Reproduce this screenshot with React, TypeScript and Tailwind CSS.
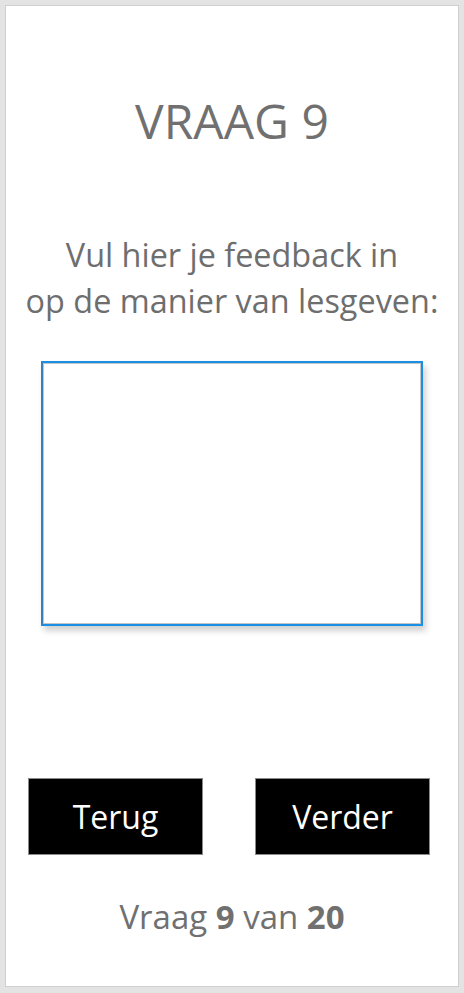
export default function App() {
  return (
    <div className="w-full h-[993px] bg-[#e3e3e3] p-[5px]" style={{ fontFamily: '"Open Sans", "Noto Sans", sans-serif' }}>
      <div className="h-[982px] w-[454px] border border-[#cfcfcf] bg-white flex flex-col items-center">
        <h1 className="mt-[85px] text-[48px] leading-[60px] text-[#707070] font-normal">VRAAG 9</h1>

        <p className="mt-[80px] text-center text-[32.4px] leading-[46px] text-[#6e6e6e] whitespace-nowrap">
          Vul hier je feedback in
          <br />
          op de manier van lesgeven:
        </p>

        <textarea className="mt-[38px] w-[382px] h-[265px] resize-none border-2 border-[#1a8fe6] border-l-[#3b7fb8] shadow-[inset_0_0_0_1px_#c4c4c4,3px_5px_6px_rgba(0,0,0,0.18)] outline-none p-2 text-[#555]" />

        <div className="mt-[152px] flex w-full gap-[52px] px-[22px]">
          <button className="w-[175px] h-[77px] bg-black border border-[#8a8a8a] text-white text-[32px]">Terug</button>
          <button className="w-[175px] h-[77px] bg-black border border-[#8a8a8a] text-white text-[32px]">Verder</button>
        </div>

        <p className="mt-[40px] text-[33px] leading-[44px] text-[#707070]">
          Vraag <span className="font-bold">9</span> van <span className="font-bold">20</span>
        </p>
      </div>
    </div>
  );
}
